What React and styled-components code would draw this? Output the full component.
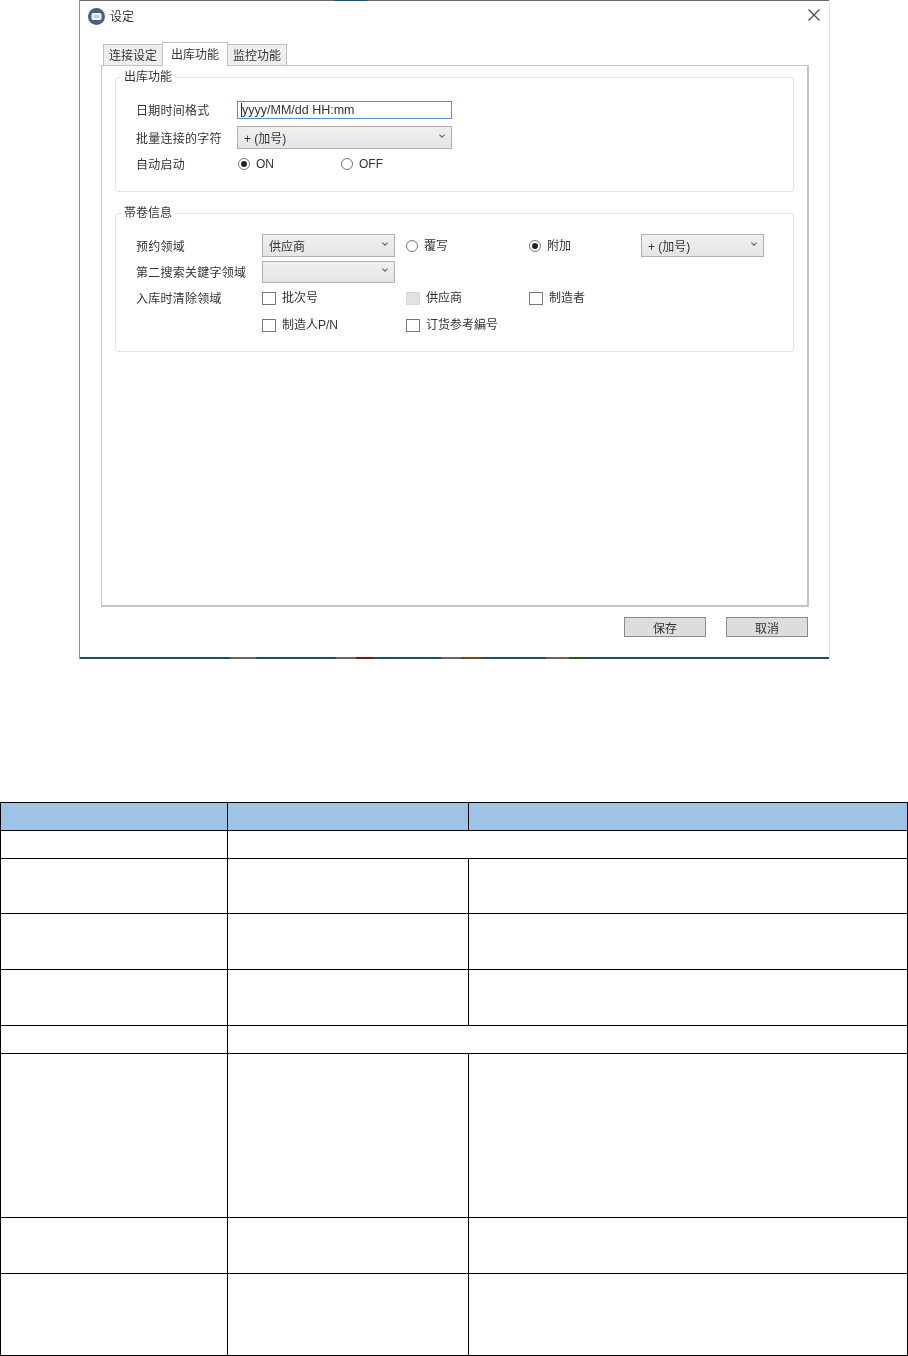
import React from 'react';
import styled, { createGlobalStyle } from 'styled-components';

const GlobalStyle = createGlobalStyle`
    html, body {
        margin: 0;
        padding: 0;
        background: #fff;
    }

    body {
        font-family: 'Liberation Sans', 'Noto Sans CJK SC', sans-serif;
        color: #333;
    }
`;

function AppIcon() {
    return (
        <svg width='17' height='17' viewBox='0 0 17 17'>
            <circle cx='8.5' cy='8.5' r='8.5' fill='#4a5f88' />
            <rect x='3.5' y='5' width='10' height='7' rx='1.8' fill='#f2f4f8' />
            <rect x='5.5' y='7' width='6' height='3' fill='#c3cad8' />
        </svg>
    );
}

function CloseIcon() {
    return (
        <CloseSvg width='12' height='12' viewBox='0 0 12 12'>
            <path d='M0.5 0.5 L11.5 11.5 M11.5 0.5 L0.5 11.5' stroke='#444' strokeWidth='1.2' fill='none' />
        </CloseSvg>
    );
}

function Chevron() {
    return (
        <ChevronSvg width='6' height='4' viewBox='0 0 6 4'>
            <path d='M0.4 0.6 L3 3.2 L5.6 0.6' stroke='#666' strokeWidth='1.1' fill='none' />
        </ChevronSvg>
    );
}

function ComboBox({ value, width }) {
    return (
        <Combo $width={width}>
            <span>{value}</span>
            <Chevron />
        </Combo>
    );
}

function Radio({ label, checked }) {
    return (
        <OptionRow>
            <RadioMark $checked={checked} />
            <span>{label}</span>
        </OptionRow>
    );
}

function Check({ label, disabled }) {
    return (
        <OptionRow>
            <CheckMark $disabled={disabled} />
            <span>{label}</span>
        </OptionRow>
    );
}

const tableRows = [
    { height: 28, header: true, cells: 3 },
    { height: 28, cells: 2 },
    { height: 55, cells: 3 },
    { height: 56, cells: 3 },
    { height: 56, cells: 3 },
    { height: 28, cells: 2 },
    { height: 164, cells: 3 },
    { height: 56, cells: 3 },
    { height: 82, cells: 3 },
];

function App() {
    return (
        <>
            <GlobalStyle />
            <Dialog>
                <TitleBar>
                    <TitleLeft>
                        <AppIcon />
                        <TitleText>设定</TitleText>
                    </TitleLeft>
                    <CloseIcon />
                </TitleBar>
                <Tabs>
                    <Tab>连接设定</Tab>
                    <Tab $active>出库功能</Tab>
                    <Tab>监控功能</Tab>
                </Tabs>
                <Panel>
                    <Group $height={122}>
                        <Legend>出库功能</Legend>
                        <FormOne>
                            <Label>日期时间格式</Label>
                            <TextBox>
                                <Caret />
                                yyyy/MM/dd HH:mm
                            </TextBox>
                            <Label>批量连接的字符</Label>
                            <ComboBox value='+ (加号)' width={215} />
                            <Label>自动启动</Label>
                            <RadioPair>
                                <Radio label='ON' checked />
                                <Radio label='OFF' />
                            </RadioPair>
                        </FormOne>
                    </Group>
                    <Group $height={146}>
                        <Legend>帯卷信息</Legend>
                        <FormTwo>
                            <Label>预约领域</Label>
                            <ComboBox value='供应商' width={133} />
                            <Radio label='覆写' />
                            <Radio label='附加' checked />
                            <ComboBox value='+ (加号)' width={123} />

                            <Label>第二搜索关鍵字领域</Label>
                            <ComboBox value='' width={133} />
                            <Spacer />
                            <Spacer />
                            <Spacer />

                            <Label>入库时清除领域</Label>
                            <Check label='批次号' />
                            <Check label='供应商' disabled />
                            <Check label='制造者' />
                            <Spacer />

                            <Spacer />
                            <Check label='制造人P/N' />
                            <Check label='订货参考編号' />
                        </FormTwo>
                    </Group>
                </Panel>
                <Footer>
                    <ActionButton>保存</ActionButton>
                    <ActionButton>取消</ActionButton>
                </Footer>
            </Dialog>
            <DocTable>
                <colgroup>
                    <col style={{ width: 227 }} />
                    <col style={{ width: 241 }} />
                    <col />
                </colgroup>
                <tbody>
                    {tableRows.map((row, i) => (
                        <tr key={i} style={{ height: row.height }}>
                            <DocCell $header={row.header} />
                            <DocCell $header={row.header} colSpan={row.cells === 2 ? 2 : 1} />
                            {row.cells === 3 && <DocCell $header={row.header} />}
                        </tr>
                    ))}
                </tbody>
            </DocTable>
        </>
    );
}

const Dialog = styled.div`
    box-sizing: border-box;
    width: 751px;
    height: 659px;
    margin-left: 79px;
    padding: 0 21px 0 21px;
    border-left: 1px solid #7f98a8;
    border-right: 1px solid #e4e4e4;
    filter: blur(0.4px);
    background:
        linear-gradient(
                to right,
                #1b4f72 0 150px,
                #6a6460 150px 176px,
                #1b4f72 176px 256px,
                #6a6460 256px 276px,
                #7a1512 276px 293px,
                #1b4f72 293px 361px,
                #6a6460 361px 381px,
                #7a4415 381px 401px,
                #1b4f72 401px 466px,
                #6a6460 466px 489px,
                #1f5a17 489px 506px,
                #1b4f72 506px
            )
            left bottom / 100% 2px no-repeat,
        linear-gradient(
                to right,
                #6a6a6a 0 254px,
                #1b4f72 254px 287px,
                #6a6a6a 287px
            )
            left top / 100% 1px no-repeat,
        #fff;
`;

const TitleBar = styled.div`
    display: flex;
    align-items: center;
    justify-content: space-between;
    height: 32px;
    margin: 0 -21px 0 -21px;
    padding: 0 9px 0 8px;
    font-size: 12px;
    line-height: 16px;
`;

const TitleLeft = styled.div`
    display: flex;
    align-items: center;
    gap: 5px;
`;

const TitleText = styled.span`
    padding-top: 2px;
`;

const CloseSvg = styled.svg`
    margin-bottom: 2px;
`;

const Tabs = styled.div`
    display: flex;
    align-items: flex-end;
    height: 33px;
    padding-left: 2px;
`;

const Tab = styled.div`
    box-sizing: border-box;
    display: flex;
    align-items: center;
    justify-content: center;
    padding-top: ${(p) => (p.$active ? '0' : '2px')};
    font-size: 12px;
    line-height: 1;
    border: 1px solid #c0c0c0;
    border-bottom: none;
    margin-left: ${(p) => (p.$active ? '-1px' : '0')};
    margin-right: ${(p) => (p.$active ? '-1px' : '0')};
    position: relative;
    width: ${(p) => (p.$active ? '66px' : '60px')};
    height: ${(p) => (p.$active ? '24px' : '21px')};
    background: ${(p) => (p.$active ? '#fff' : '#eeeeee')};
    z-index: ${(p) => (p.$active ? 2 : 1)};
    margin-bottom: ${(p) => (p.$active ? '-1px' : '0')};
`;

const Panel = styled.div`
    box-sizing: border-box;
    display: flex;
    flex-direction: column;
    gap: 14px;
    width: 708px;
    height: 542px;
    padding: 4px 13px 0 13px;
    border: 1px solid #c4c4c4;
    border-right-width: 2px;
    border-bottom-width: 2px;
`;

const Group = styled.fieldset`
    box-sizing: border-box;
    flex: none;
    height: ${(p) => p.$height}px;
    margin: 0;
    padding: 0 0 0 20px;
    border: 1px solid #dbe5ee;
    border-radius: 3px;
`;

const Legend = styled.legend`
    margin-left: -15px;
    padding: 0 3px 0 3px;
    font-size: 12px;
    line-height: 14px;
`;

const Label = styled.div`
    padding-top: 2px;
    font-size: 12px;
    line-height: 16px;
    letter-spacing: 0.25px;
    white-space: nowrap;
`;

const FormOne = styled.div`
    display: grid;
    grid-template-columns: 101px 215px;
    grid-template-rows: 18px 23px 16px;
    row-gap: 7px;
    align-items: center;
    margin-top: 17px;
`;

const FormTwo = styled.div`
    display: grid;
    grid-template-columns: 126px 144px 123px 112px 123px;
    grid-template-rows: 23px 22px 22px 24px;
    row-gap: 4px;
    align-items: center;
    margin-top: 14px;
`;

const Spacer = styled.div`
    grid-column: auto;
`;

const TextBox = styled.div`
    box-sizing: border-box;
    display: flex;
    align-items: center;
    height: 18px;
    padding-left: 3px;
    border: 1px solid #4a94d4;
    font-size: 12.5px;
    background: #fff;
`;

const Caret = styled.span`
    width: 1px;
    height: 14px;
    background: #222;
`;

const Combo = styled.div`
    box-sizing: border-box;
    display: flex;
    align-items: center;
    justify-content: space-between;
    width: ${(p) => p.$width}px;
    height: 100%;
    padding: 0 6px 0 6px;
    border: 1px solid #b0b0b0;
    background: linear-gradient(#f0f0f0, #e5e5e5);
    font-size: 12px;
`;

const ChevronSvg = styled.svg`
    margin-bottom: 4px;
`;

const RadioPair = styled.div`
    display: grid;
    grid-template-columns: 103px 1fr;
    padding-left: 1px;
`;

const OptionRow = styled.div`
    display: flex;
    align-items: center;
    gap: 6px;
    font-size: 12px;
    line-height: 16px;
    white-space: nowrap;
`;

const RadioMark = styled.span`
    box-sizing: border-box;
    display: flex;
    align-items: center;
    justify-content: center;
    width: 12px;
    height: 12px;
    border: 1px solid #777;
    border-radius: 50%;
    background: #fff;

    &::after {
        content: '';
        display: ${(p) => (p.$checked ? 'block' : 'none')};
        width: 6px;
        height: 6px;
        border-radius: 50%;
        background: #222;
    }
`;

const CheckMark = styled.span`
    box-sizing: border-box;
    display: block;
    width: 14px;
    height: 13px;
    border: 1px solid ${(p) => (p.$disabled ? '#d8d8d8' : '#777')};
    background: ${(p) => (p.$disabled ? '#e2e2e2' : '#fff')};
`;

const Footer = styled.div`
    display: flex;
    justify-content: flex-end;
    gap: 20px;
    width: 707px;
    margin-top: 10px;
`;

const ActionButton = styled.div`
    box-sizing: border-box;
    display: flex;
    align-items: center;
    justify-content: center;
    width: 82px;
    height: 20px;
    border: 1px solid #8a8a8a;
    background: #dddddd;
    font-size: 12px;
`;

const DocTable = styled.table`
    width: 908px;
    margin-top: 143px;
    border-collapse: collapse;
    table-layout: fixed;
`;

const DocCell = styled.td`
    padding: 0;
    border: 1px solid #000;
    background: ${(p) => (p.$header ? '#9dc3e6' : '#fff')};
`;

export default App;
